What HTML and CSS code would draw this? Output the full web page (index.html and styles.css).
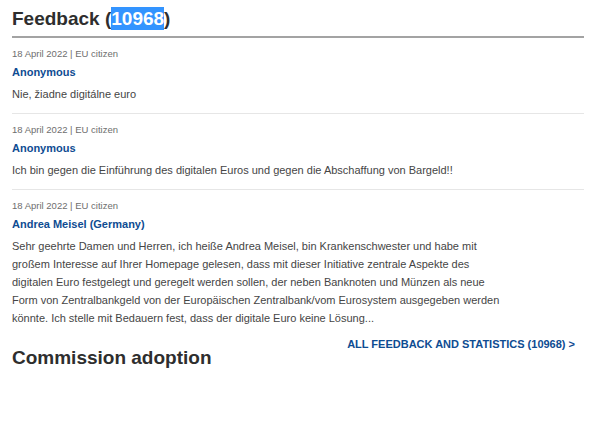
FILE: index.html
```html
<!DOCTYPE html>
<html lang="en">
<head>
<meta charset="utf-8">
<title>Feedback</title>
<link rel="stylesheet" href="styles.css">
</head>
<body>
<div class="page">
  <h2 class="title">Feedback (<span class="sel">10968</span>)</h2>
  <ul class="list">
    <li class="item">
      <div class="meta">18 April 2022 | EU citizen</div>
      <div class="name">Anonymous</div>
      <p class="text">Nie, žiadne digitálne euro</p>
    </li>
    <li class="item">
      <div class="meta">18 April 2022 | EU citizen</div>
      <div class="name">Anonymous</div>
      <p class="text">Ich bin gegen die Einführung des digitalen Euros und gegen die Abschaffung von Bargeld!!</p>
    </li>
    <li class="item last">
      <div class="meta">18 April 2022 | EU citizen</div>
      <div class="name">Andrea Meisel (Germany)</div>
      <p class="text long">Sehr geehrte Damen und Herren, ich heiße Andrea Meisel, bin Krankenschwester und habe mit großem Interesse auf Ihrer Homepage gelesen, dass mit dieser Initiative zentrale Aspekte des digitalen Euro festgelegt und geregelt werden sollen, der neben Banknoten und Münzen als neue Form von Zentralbankgeld von der Europäischen Zentralbank/vom Eurosystem ausgegeben werden könnte. Ich stelle mit Bedauern fest, dass der digitale Euro keine Lösung...</p>
    </li>
  </ul>
  <div class="more"><a class="more-link" href="#">All feedback and statistics (10968) &gt;</a></div>
  <h2 class="section">Commission adoption</h2>
</div>
</body>
</html>
```
FILE: styles.css
```css
html, body {
  margin: 0;
  padding: 0;
  background: #ffffff;
}
body {
  font-family: "Liberation Sans", Arial, sans-serif;
  color: #404040;
}
.page {
  padding: 8px 16px 0 12px;
}
.title {
  margin: 0;
  font-size: 19px;
  line-height: 22px;
  font-weight: bold;
  color: #2e2e2e;
  padding-bottom: 6px;
  border-bottom: 2px solid #a3a3a3;
}
.sel {
  background: #3394ff;
  color: #ffffff;
  padding: 1px 0;
}
.list {
  list-style: none;
  margin: 0;
  padding: 0;
}
.item {
  padding: 9px 0 10px;
  border-bottom: 1px solid #e6e6e6;
}
.item.last {
  border-bottom: none;
}
.meta {
  font-size: 9.5px;
  line-height: 14px;
  color: #6e6e6e;
  margin-bottom: 3px;
}
.name {
  font-size: 11px;
  line-height: 16px;
  font-weight: bold;
  color: #0e4c92;
  margin-bottom: 5px;
}
.text {
  margin: 0;
  font-size: 11px;
  line-height: 18px;
  color: #454545;
}
.long {
  max-width: 492px;
}
.more {
  display: flex;
  justify-content: flex-end;
  padding-right: 9px;
  margin-top: 1px;
}
.more-link {
  font-size: 11px;
  line-height: 12px;
  font-weight: bold;
  text-transform: uppercase;
  color: #0e4c92;
  text-decoration: none;
}
.section {
  margin: -3px 0 0;
  font-size: 19px;
  line-height: 22px;
  font-weight: bold;
  color: #2e2e2e;
}
```
